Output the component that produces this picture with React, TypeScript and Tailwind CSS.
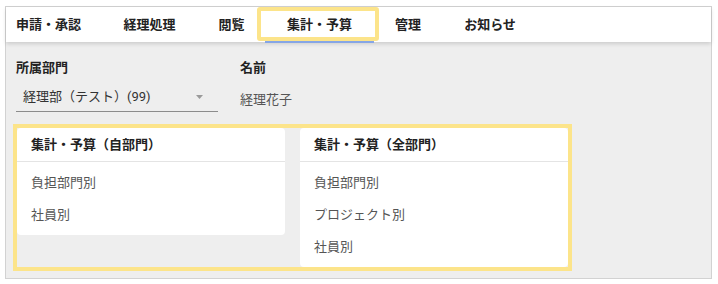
import React from 'react';

const tabs = [
  { label: '申請・承認', cls: 'w-[95px] pl-[10px] justify-start' },
  { label: '経理処理', cls: 'w-[97px] justify-center' },
  { label: '閲覧', cls: 'w-[67px] justify-center' },
  { label: '集計・予算', cls: 'w-[109px] justify-center', active: true },
  { label: '管理', cls: 'w-[68px] justify-center' },
  { label: 'お知らせ', cls: 'w-[96px] justify-center' },
];

const cards = [
  { title: '集計・予算（自部門）', items: ['負担部門別', '社員別'] },
  { title: '集計・予算（全部門）', items: ['負担部門別', 'プロジェクト別', '社員別'] },
];

export default function App() {
  return (
    <div
      className="w-[718px] h-[284px] bg-white pt-[6px] pl-[5px]"
      style={{ fontFamily: 'Roboto, "Noto Sans CJK JP", sans-serif' }}
    >
      <div className="w-[707px] h-[273px] border border-[#d2d2d2] bg-[#eeeeee]">
        {/* Top tabs */}
        <div className="relative h-[35px] bg-white flex shadow-[0_2px_4px_rgba(0,0,0,0.14)]">
          {tabs.map((t) => (
            <div key={t.label} className={`relative h-full flex items-center text-[13px] font-bold text-[#222] ${t.cls}`}>
              {t.label}
              {t.active && (
                <>
                  <span className="absolute left-0 right-0 bottom-[-1px] h-[2px] bg-[#86a6e6]"></span>
                  <span className="absolute -left-[8px] -right-[5px] top-0 bottom-[1px] border-[4px] border-[#fce48a] rounded-[3px]"></span>
                </>
              )}
            </div>
          ))}
        </div>

        <div className="px-[10px] pt-[16px]">
          {/* Department / name */}
          <div className="flex gap-[22px]">
            <div className="w-[202px]">
              <div className="h-[20px] flex items-center text-[13px] font-bold text-[#222]">所属部門</div>
              <div className="mt-[5px] h-[29px] flex items-center justify-between border-b border-[#8c8c8c] pl-[7px] pr-[15px] text-[13px] text-[#333]">
                <span>経理部（テスト）(99)</span>
                <svg width="7" height="4" viewBox="0 0 7 4">
                  <path d="M0 0 H7 L3.5 4 Z" fill="#9a9a9a" />
                </svg>
              </div>
            </div>
            <div>
              <div className="h-[20px] flex items-center text-[13px] font-bold text-[#222]">名前</div>
              <div className="mt-[7px] h-[29px] flex items-center text-[13px] text-[#555]">経理花子</div>
            </div>
          </div>

          {/* Summary cards */}
          <div className="mt-[14px] ml-[1px] w-[551px] flex items-start gap-[15px] outline outline-[4px] outline-[#fce48a]">
            {cards.map((c) => (
              <div key={c.title} className="w-[268px] bg-white rounded-[4px]">
                <div className="h-[34px] px-[14px] flex items-center border-b border-[#e4e4e4] text-[13px] font-bold text-[#222]">
                  {c.title}
                </div>
                <div className="pt-[5px] pb-[4px]">
                  {c.items.map((it) => (
                    <div key={it} className="h-[32px] px-[14px] flex items-center text-[13px] text-[#555]">
                      {it}
                    </div>
                  ))}
                </div>
              </div>
            ))}
          </div>
        </div>
      </div>
    </div>
  );
}
